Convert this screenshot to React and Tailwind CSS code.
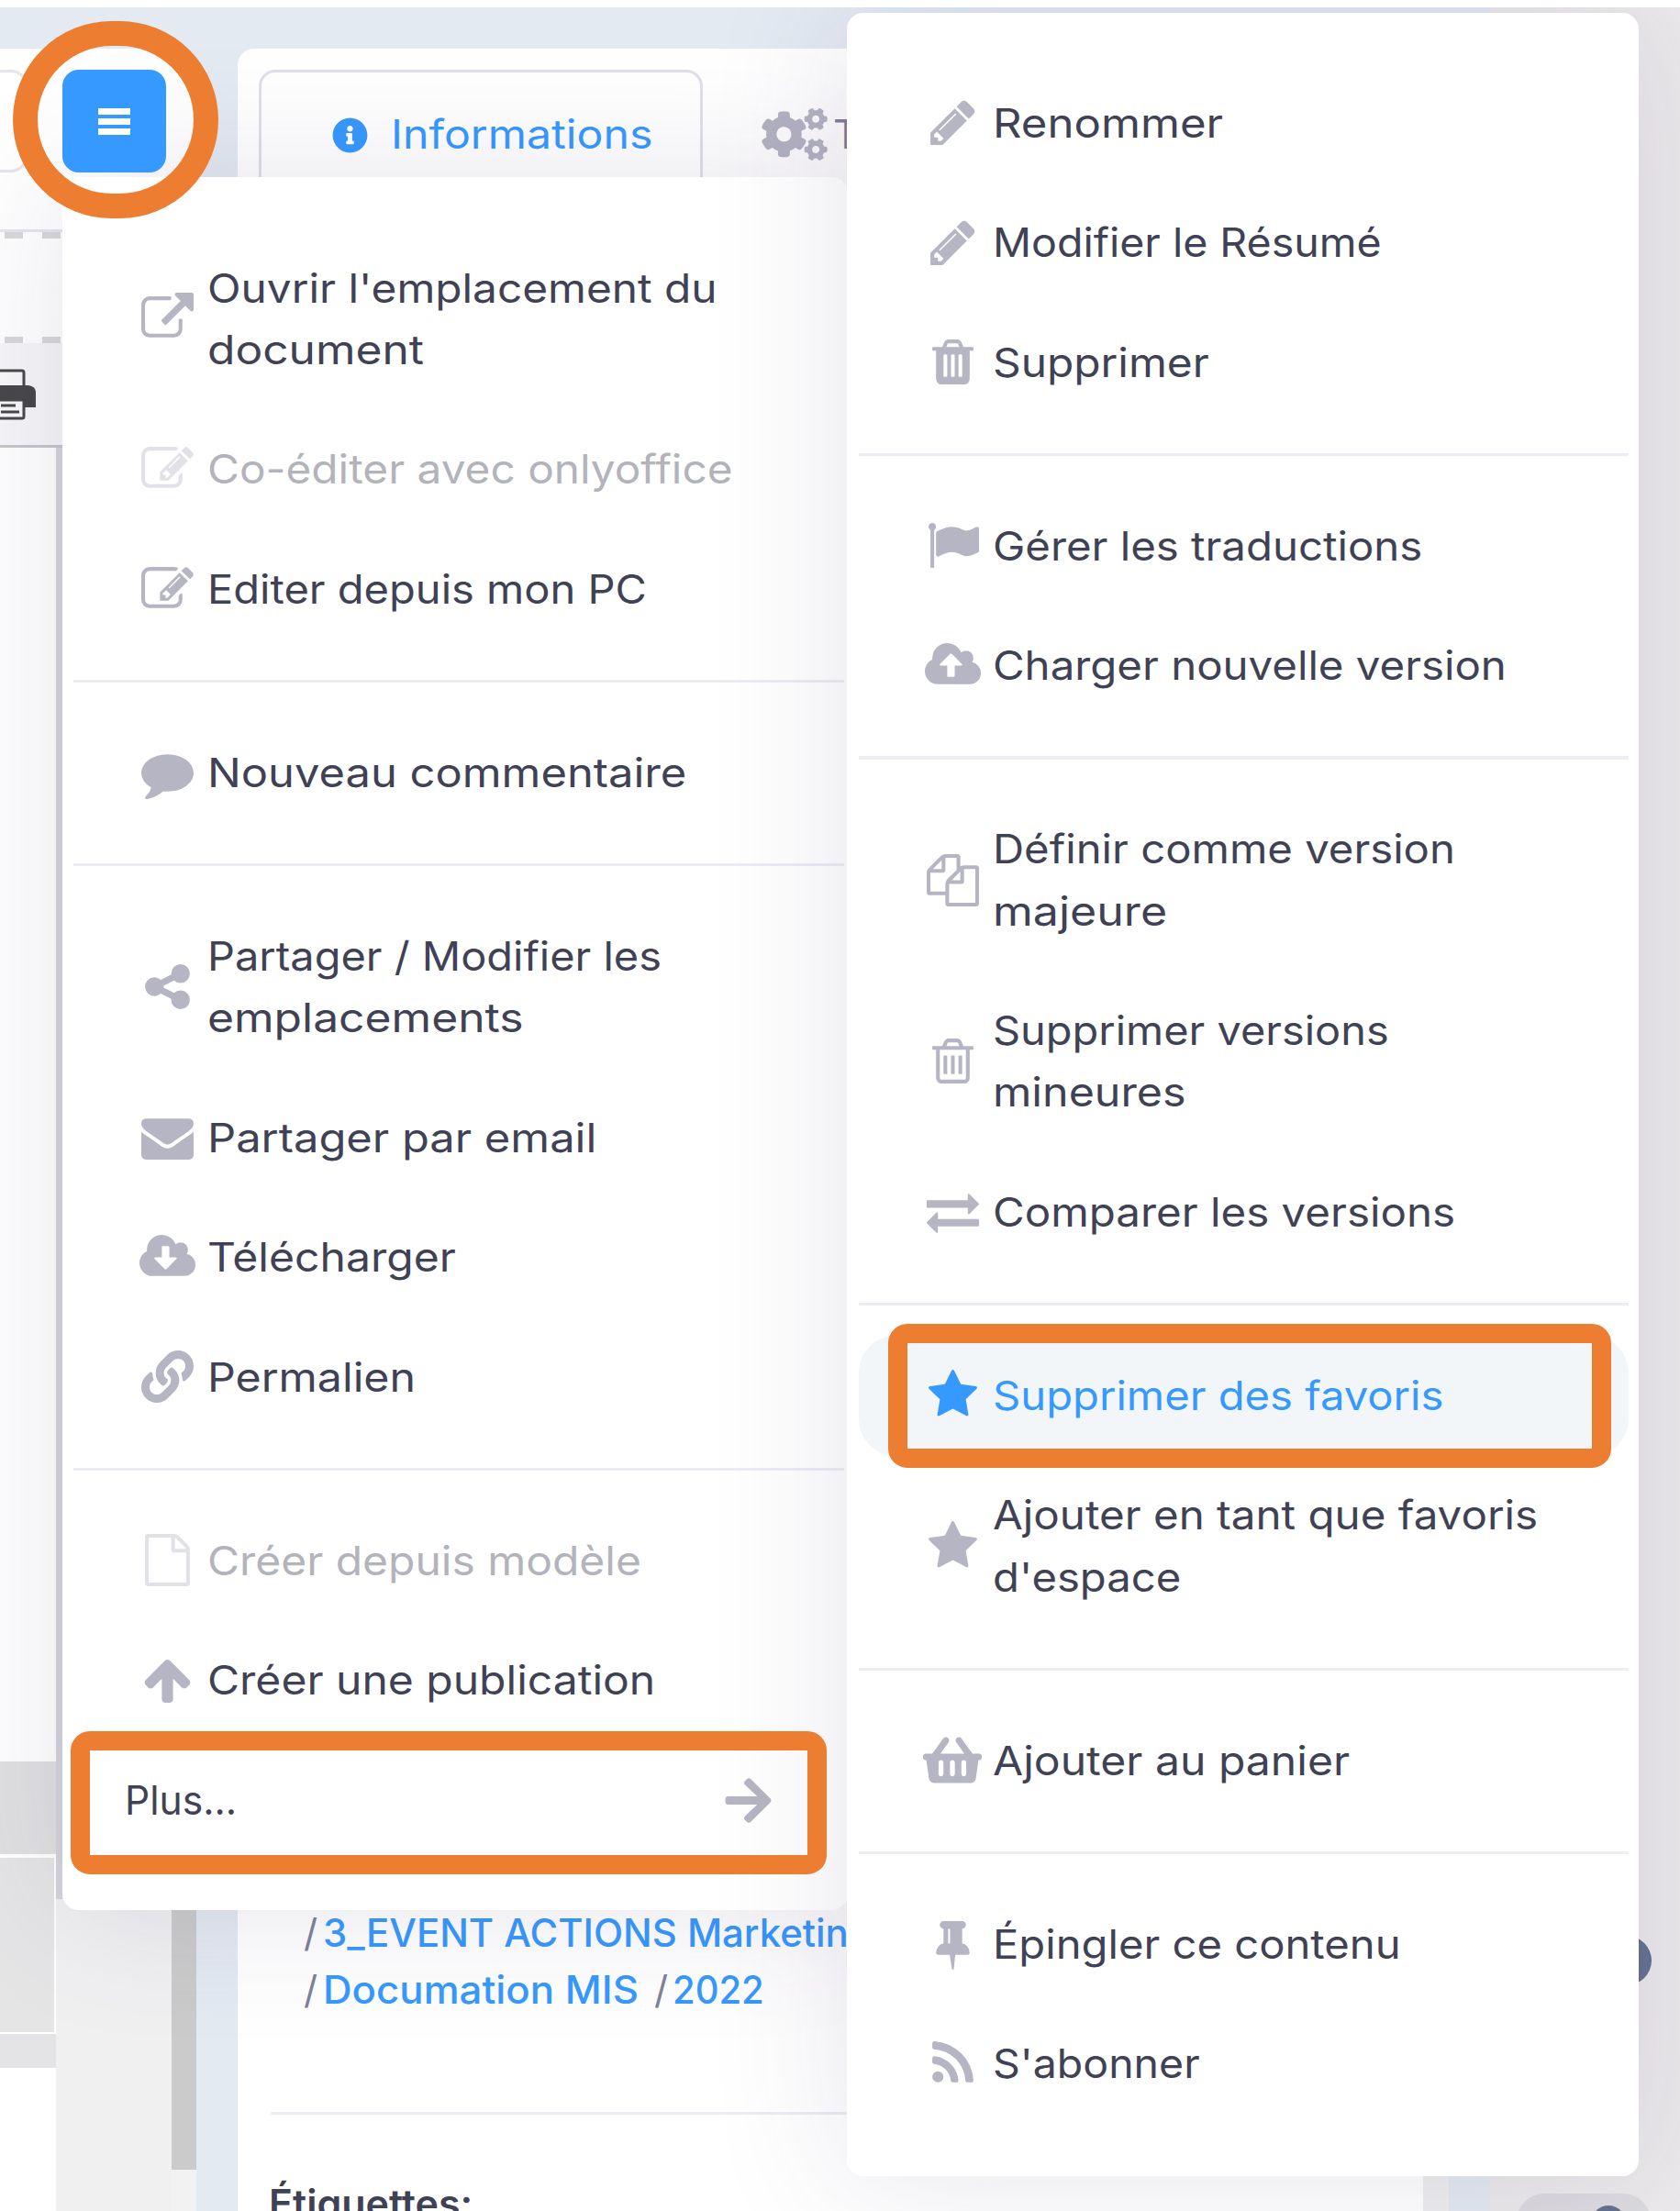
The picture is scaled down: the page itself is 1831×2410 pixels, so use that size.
import React, { useLayoutEffect, useRef, useState } from "react";
import { FaLink, FaShoppingBasket, FaArrowRight, FaInfoCircle, FaCogs } from "react-icons/fa";

const PATHS = {
  pencil:
    "M491 1536l91-91-235-235-91 91v107h128v128h107zm523-928q0-22-22-22-10 0-17 7l-542 542q-7 7-7 17 0 22 22 22 10 0 17-7l542-542q7-7 7-17zm-54-192l416 416-832 832h-416v-416zm683 96q0 53-37 90l-166 166-416-416 166-165q36-38 90-38 53 0 91 38l235 234q37 39 37 91z",
  external:
    "M1408 928v320q0 119-84.5 203.5t-203.5 84.5h-832q-119 0-203.5-84.5t-84.5-203.5v-832q0-119 84.5-203.5t203.5-84.5h704q14 0 23 9t9 23v64q0 14-9 23t-23 9h-704q-66 0-113 47t-47 113v832q0 66 47 113t113 47h832q66 0 113-47t47-113v-320q0-14 9-23t23-9h64q14 0 23 9t9 23zm384-864v512q0 26-19 45t-45 19-45-19l-176-176-652 652q-10 10-23 10t-23-10l-114-114q-10-10-10-23t10-23l652-652-176-176q-19-19-19-45t19-45 45-19h512q26 0 45 19t19 45z",
  edit:
    "M888 1184l116-116-152-152-116 116v56h96v96h56zm440-720q-16-16-33 1l-350 350q-17 17-1 33t33-1l350-350q17-17 1-33zm80 594v190q0 119-84.5 203.5t-203.5 84.5h-832q-119 0-203.5-84.5t-84.5-203.5v-832q0-119 84.5-203.5t203.5-84.5h832q63 0 117 25 15 7 18 23 3 17-9 29l-49 49q-14 14-32 8-23-6-45-6h-832q-66 0-113 47t-47 113v832q0 66 47 113t113 47h832q66 0 113-47t47-113v-126q0-13 9-22l64-64q15-15 35-7t20 29zm-96-738l288 288-672 672h-288v-288zm444 132l-92 92-288-288 92-92q28-28 68-28t68 28l152 152q28 28 28 68t-28 68z",
  comment:
    "M1792 896q0 174-120 321.5t-326 233-450 85.5q-70 0-145-8-198 175-460 242-49 14-114 22-17 2-30.5-9t-17.5-29v-1q-3-4-.5-12t2-10 4.5-9.5l6-9 7-8.5 8-9q7-8 31-34.5t34.5-38 31-39.5 32.5-51 27-59 26-76q-157-89-247.5-220t-90.5-281q0-130 71-248.5t191-204.5 286-136.5 348-50.5 348 50.5 286 136.5 191 204.5 71 248.5z",
  share:
    "M1344 1024q133 0 226.5 93.5t93.5 226.5-93.5 226.5-226.5 93.5-226.5-93.5-93.5-226.5q0-12 2-34l-360-180q-92 86-218 86-133 0-226.5-93.5t-93.5-226.5 93.5-226.5 226.5-93.5q126 0 218 86l360-180q-2-22-2-34 0-133 93.5-226.5t226.5-93.5 226.5 93.5 93.5 226.5-93.5 226.5-226.5 93.5q-126 0-218-86l-360 180q2 22 2 34t-2 34l360 180q92-86 218-86z",
  envelope:
    "M1792 710v794q0 66-47 113t-113 47h-1472q-66 0-113-47t-47-113v-794q44 49 101 87 362 246 497 345 57 42 92.5 65.5t94.5 48 110 24.5h2q51 0 110-24.5t94.5-48 92.5-65.5q170-123 498-345 57-39 100-87zm0-294q0 79-49 151t-122 123q-376 261-468 325-10 7-42.5 30.5t-54 38-52 32.5-57.5 27-50 9h-2q-23 0-50-9t-57.5-27-52-32.5-54-38-42.5-30.5q-91-64-262-182.5t-205-142.5q-62-42-117-115.5t-55-136.5q0-78 41.5-130t118.5-52h1472q65 0 112.5 47t47.5 113z",
  download:
    "M1216 928q0-14-9-23t-23-9h-224v-352q0-13-9.5-22.5t-22.5-9.5h-192q-13 0-22.5 9.5t-9.5 22.5v352h-224q-13 0-22.5 9.5t-9.5 22.5q0 14 9 23l352 352q9 9 23 9t23-9l351-351q10-12 10-24zm640 224q0 159-112.5 271.5t-271.5 112.5h-1088q-185 0-316.5-131.5t-131.5-316.5q0-130 70-240t188-165q-2-30-2-43 0-212 150-362t362-150q156 0 285.5 87t188.5 231q71-62 166-62 106 0 181 75t75 181q0 76-41 138 130 31 213.5 135.5t83.5 238.5z",
  upload:
    "M1216 864q0-14-9-23l-352-352q-9-9-23-9t-23 9l-351 351q-10 12-10 24 0 14 9 23t23 9h224v352q0 13 9.5 22.5t22.5 9.5h192q13 0 22.5-9.5t9.5-22.5v-352h224q13 0 22.5-9.5t9.5-22.5zm640 288q0 159-112.5 271.5t-271.5 112.5h-1088q-185 0-316.5-131.5t-131.5-316.5q0-130 70-240t188-165q-2-30-2-43 0-212 150-362t362-150q156 0 285.5 87t188.5 231q71-62 166-62 106 0 181 75t75 181q0 76-41 138 130 31 213.5 135.5t83.5 238.5z",
  trash:
    "M704 1376v-704q0-14-9-23t-23-9h-64q-14 0-23 9t-9 23v704q0 14 9 23t23 9h64q14 0 23-9t9-23zm256 0v-704q0-14-9-23t-23-9h-64q-14 0-23 9t-9 23v704q0 14 9 23t23 9h64q14 0 23-9t9-23zm256 0v-704q0-14-9-23t-23-9h-64q-14 0-23 9t-9 23v704q0 14 9 23t23 9h64q14 0 23-9t9-23zm-544-992h448l-48-117q-7-9-17-11h-317q-10 2-17 11zm928 32v64q0 14-9 23t-23 9h-96v948q0 83-47 143.5t-113 60.5h-832q-66 0-113-58.5t-47-141.5v-952h-96q-14 0-23-9t-9-23v-64q0-14 9-23t23-9h309l70-167q15-37 54-63t79-26h320q40 0 79 26t54 63l70 167h309q14 0 23 9t9 23z",
  trashOutline:
    "M704 736v576q0 14-9 23t-23 9h-64q-14 0-23-9t-9-23v-576q0-14 9-23t23-9h64q14 0 23 9t9 23zm256 0v576q0 14-9 23t-23 9h-64q-14 0-23-9t-9-23v-576q0-14 9-23t23-9h64q14 0 23 9t9 23zm256 0v576q0 14-9 23t-23 9h-64q-14 0-23-9t-9-23v-576q0-14 9-23t23-9h64q14 0 23 9t9 23zm128 724v-948h-896v948q0 22 7 40.5t14.5 27 10.5 8.5h832q3 0 10.5-8.5t14.5-27 7-40.5zm-672-1076h448l-48-117q-7-9-17-11h-317q-10 2-17 11zm928 32v64q0 14-9 23t-23 9h-96v948q0 83-47 143.5t-113 60.5h-832q-66 0-113-58.5t-47-141.5v-952h-96q-14 0-23-9t-9-23v-64q0-14 9-23t23-9h309l70-167q15-37 54-63t79-26h320q40 0 79 26t54 63l70 167h309q14 0 23 9t9 23z",
  flag:
    "M320 256q0 72-64 110v1266q0 13-9.5 22.5t-22.5 9.5h-64q-13 0-22.5-9.5t-9.5-22.5v-1266q-64-38-64-110 0-53 37.5-90.5t90.5-37.5 90.5 37.5 37.5 90.5zm1472 64v763q0 25-12.5 38.5t-39.5 27.5q-215 116-369 116-61 0-123.5-22t-108.5-48-115.5-48-142.5-22q-192 0-464 146-17 9-33 9-26 0-45-19t-19-45v-742q0-32 31-55 21-14 79-43 236-120 421-120 107 0 200 29t219 88q38 19 88 19 54 0 117.5-21t110-47 88-47 54.5-21q26 0 45 19t19 45z",
  files:
    "M1696 384q40 0 68 28t28 68v1216q0 40-28 68t-68 28h-960q-40 0-68-28t-28-68v-288h-544q-40 0-68-28t-28-68v-672q0-40 20-88t48-76l408-408q28-28 76-48t88-20h416q40 0 68 28t28 68v328q68-40 128-40h416zm-544 213l-299 299h299v-299zm-640-384l-299 299h299v-299zm196 647l316-316v-416h-384v416q0 40-28 68t-68 28h-416v640h512v-256q0-40 20-88t48-76zm956 804v-1152h-384v416q0 40-28 68t-68 28h-416v640h896z",
  exchange:
    "M1792 1184v192q0 13-9.5 22.5t-22.5 9.5h-1376v192q0 13-9.5 22.5t-22.5 9.5q-12 0-24-10l-319-320q-9-9-9-22 0-14 9-23l320-320q9-9 23-9 13 0 22.5 9.5t9.5 22.5v192h1376q13 0 22.5 9.5t9.5 22.5zm0-544q0 14-9 23l-320 320q-9 9-23 9-13 0-22.5-9.5t-9.5-22.5v-192h-1376q-13 0-22.5-9.5t-9.5-22.5v-192q0-13 9.5-22.5t22.5-9.5h1376v-192q0-14 9-23t23-9q12 0 24 10l319 319q9 9 9 23z",
  star:
    "M1728 647q0 22-26 48l-363 354 86 500q1 7 1 20 0 21-10.5 35.5t-30.5 14.5q-19 0-40-12l-449-236-449 236q-22 12-40 12-21 0-31.5-14.5t-10.5-35.5q0-6 2-20l86-500-364-354q-25-27-25-48 0-37 56-46l502-73 225-455q19-41 49-41t49 41l225 455 502 73q56 9 56 46z",
  file:
    "M1596 380q28 28 48 76t20 88v1152q0 40-28 68t-68 28h-1344q-40 0-68-28t-28-68v-1600q0-40 28-68t68-28h896q40 0 88 20t76 48zm-444-244v376h376q-10-29-22-41l-313-313q-12-12-41-22zm384 1528v-1024h-416q-40 0-68-28t-28-68v-416h-768v1536h1280z",
  arrowUp:
    "M1675 971q0 51-37 90l-75 75q-38 38-91 38-54 0-90-38l-294-293v704q0 52-37.5 84.5t-90.5 32.5h-128q-53 0-90.5-32.5t-37.5-84.5v-704l-294 293q-36 38-90 38t-90-38l-75-75q-38-38-38-90 0-53 38-91l651-651q35-37 90-37 54 0 91 37l651 651q37 39 37 91z",
  pin:
    "M800 864v-448q0-14-9-23t-23-9-23 9-9 23v448q0 14 9 23t23 9 23-9 9-23zm672 352q0 26-19 45t-45 19h-429l-51 483q-2 12-10.5 20.5t-20.5 8.5h-1q-27 0-32-27l-76-485h-404q-26 0-45-19t-19-45q0-123 78.5-221.5t177.5-98.5v-512q-52 0-90-38t-38-90 38-90 90-38h640q52 0 90 38t38 90-38 90-90 38v512q99 0 177.5 98.5t78.5 221.5z",
  rss:
    "M576 1344q0 80-56 136t-136 56-136-56-56-136 56-136 136-56 136 56 56 136zm512 123q2 28-17 48-18 21-47 21h-135q-25 0-43-16.5t-20-41.5q-22-229-184.5-391.5t-391.5-184.5q-25-2-41.5-20t-16.5-43v-135q0-29 21-47 17-17 43-17h5q160 13 306 80.5t259 181.5q114 113 181.5 259t80.5 306zm512 2q2 27-18 47-18 20-46 20h-143q-26 0-44.5-17.5t-19.5-42.5q-12-215-101-408.5t-231.5-336-336-231.5-408.5-102q-25-1-42.5-19.5t-17.5-43.5v-143q0-28 20-46 18-18 44-18h3q262 13 501.5 120t425.5 294q187 186 294 425.5t120 501.5z",
};

function Glyph({ name }) {
  if (name === "link") return <FaLink className="h-[57px] w-[57px]" />;
  if (name === "basket") return <FaShoppingBasket className="h-[57px] w-[64px]" />;
  return (
    <svg viewBox="0 0 1792 1792" className="h-[57px] w-[57px] overflow-visible" fill="currentColor">
      <path d={PATHS[name]} />
    </svg>
  );
}

/* Widens a line of text so that it spans the given width. */
function Line({ text, width, className = "" }) {
  const ref = useRef(null);
  const [stretch, setStretch] = useState(1);
  useLayoutEffect(() => {
    setStretch(width / ref.current.offsetWidth);
  }, [text, width]);
  return (
    <span className={"block shrink-0 whitespace-pre " + className} style={{ width }}>
      <span ref={ref} className="inline-block origin-left" style={{ transform: `scaleX(${stretch})` }}>
        {text}
      </span>
    </span>
  );
}

function Item({ icon, lines, disabled, active }) {
  const tone = active ? "text-[#3699ff]" : disabled ? "text-[#b2b3bb]" : "text-[#3f4254]";
  const iconTone = active ? "text-[#3699ff]" : disabled ? "text-[#e2e1e8]" : "text-[#b5b5c3]";
  return (
    <li
      className={
        "flex items-center rounded-[40px] py-[31.6px] pl-[65.5px] " + (active ? "bg-[#f3f6f9]" : "")
      }
    >
      <span className={"mb-[1px] flex w-[73px] shrink-0 justify-center " + iconTone}>
        <Glyph name={icon} />
      </span>
      <span className={"ml-[7.5px] " + tone}>
        {lines.map(([text, width]) => (
          <Line key={text} text={text} width={width + 4} />
        ))}
      </span>
    </li>
  );
}

function Divider() {
  return <li className="my-[33.05px] h-[3.5px] bg-[#ebedf3]" />;
}

const LEFT = [
  { icon: "external", lines: [["Ouvrir l'emplacement du", 552], ["document", 232]] },
  { icon: "edit", lines: [["Co-éditer avec onlyoffice", 568]], disabled: true },
  { icon: "edit", lines: [["Editer depuis mon PC", 475]] },
  null,
  { icon: "comment", lines: [["Nouveau commentaire", 518]] },
  null,
  { icon: "share", lines: [["Partager / Modifier les", 491], ["emplacements", 341]] },
  { icon: "envelope", lines: [["Partager par email", 420]] },
  { icon: "download", lines: [["Télécharger", 267]] },
  { icon: "link", lines: [["Permalien", 223]] },
  null,
  { icon: "file", lines: [["Créer depuis modèle", 469]], disabled: true },
  { icon: "arrowUp", lines: [["Créer une publication", 484]] },
];

const RIGHT = [
  { icon: "pencil", lines: [["Renommer", 247]] },
  { icon: "pencil", lines: [["Modifier le Résumé", 420]] },
  { icon: "trash", lines: [["Supprimer", 232]] },
  null,
  { icon: "flag", lines: [["Gérer les traductions", 464]] },
  { icon: "upload", lines: [["Charger nouvelle version", 556]] },
  null,
  { icon: "files", lines: [["Définir comme version", 500], ["majeure", 186]] },
  { icon: "trashOutline", lines: [["Supprimer versions", 428], ["mineures", 207]] },
  { icon: "exchange", lines: [["Comparer les versions", 500]] },
  null,
  { icon: "star", lines: [["Supprimer des favoris", 487]], active: true },
  { icon: "star", lines: [["Ajouter en tant que favoris", 590], ["d'espace", 201]] },
  null,
  { icon: "basket", lines: [["Ajouter au panier", 385]] },
  null,
  { icon: "pin", lines: [["Épingler ce contenu", 441]] },
  { icon: "rss", lines: [["S'abonner", 222]] },
];

function MenuItems({ items }) {
  return items.map((item, i) => (item ? <Item key={i} {...item} /> : <Divider key={i} />));
}

function Printer() {
  return (
    <svg viewBox="0 0 39 56" className="h-[56px] w-[39px]">
      <path d="M0 2h24q2 0 2 2v16H0" fill="#f8f8f9" stroke="#474749" strokeWidth="3" />
      <path d="M0 18h31q8 1 8 8v16H0z" fill="#474749" />
      <path d="M0 34h26v18q0 2-2 2H0" fill="#f8f8f9" stroke="#474749" strokeWidth="3" />
      <path d="M1 40h16M1 47h20" stroke="#474749" strokeWidth="3" />
    </svg>
  );
}

function Dashes() {
  return (
    <div className="flex h-[7px] gap-[21px] pl-[5px]">
      <span className="w-5 bg-[#d8d8d9]" />
      <span className="w-5 bg-[#d8d8d9]" />
      <span className="w-5 bg-[#d8d8d9]" />
    </div>
  );
}

function Viewer() {
  return (
    <section className="mt-[45px] flex h-[2357px] w-[214px] flex-col overflow-hidden rounded-tr-[18px] bg-white">
      <div className="h-[200px] border-b-[3px] border-[#e4e6ef] pt-[23px]">
        <div className="h-[112px] w-[30px] rounded-r-[18px] border-[3px] border-l-0 border-[#e4e6ef]" />
      </div>
      <Dashes />
      <div className="h-[107px]" />
      <Dashes />
      <div className="h-[114px] border-b-[3px] border-[#c6c6c9] bg-[#f6f6f8] pt-[28px]">
        <Printer />
      </div>
      <div className="flex grow">
        <div className="flex w-[61px] flex-col bg-[#e4e4e6]">
          <div className="h-[1432px] bg-white" />
          <div className="h-[101px] bg-[#e0e0e1]" />
          <div className="h-[196px] border-t-[4px] border-r-2 border-b-2 border-white bg-[#e5e5e6]" />
          <div className="mt-[37px] grow bg-white" />
        </div>
        <div className="flex w-[126px] bg-[#f0f0f1]">
          <div className="mb-[340px] w-[7px] bg-[#d5d4dc]" />
        </div>
        <div className="w-[27px] bg-[#f2f2f2]">
          <div className="h-[1877px] bg-[#cbcbcb]" />
        </div>
      </div>
    </section>
  );
}

function Details() {
  return (
    <section className="mt-[45px] flex h-[2357px] w-[1320px] rounded-tl-[18px] bg-white">
      <div className="w-[1292px]">
        <div className="flex h-[140px] pt-[23px] pl-[23px]">
          <div className="flex w-[484px] items-start rounded-t-[18px] border-[3px] border-b-0 border-[#dfe0ea] pt-[34px] pl-[77px] text-[#3699ff]">
            <FaInfoCircle className="mt-[15px] h-[39px] w-[39px]" />
            <Line text="Informations" width={285} className="ml-[25px] leading-[67px]" />
          </div>
          <div className="flex items-start pt-[37px] pl-[64px] text-[#b5b5c3]">
            <FaCogs className="mt-[5px] h-[57px] w-[72px]" />
            <span className="ml-[6px] leading-[67px] text-[#7e8299]">T</span>
          </div>
        </div>
        <div className="mt-[1882.5px] ml-[72px] text-[42px] leading-[62px] font-medium text-[#3699ff]">
          <div className="flex">
            <span className="w-[21px] font-normal text-[#7e8299]">/</span>
            <Line text="3_EVENT ACTIONS Marketing" width={599} />
          </div>
          <div className="flex">
            <span className="w-[21px] font-normal text-[#7e8299]">/</span>
            <Line text="Documation MIS" width={344} />
            <span className="ml-[17px] w-[20px] font-normal text-[#7e8299]">/</span>
            <Line text="2022" width={100} />
          </div>
        </div>
        <div className="mt-[102px] ml-[36px] h-[3px] w-[1220px] bg-[#ebedf3]" />
        <div className="mt-[66px] ml-[34px] text-[42px] leading-[62px] font-semibold text-[#3f4254]">
          <Line text="Étiquettes:" width={222} />
        </div>
      </div>
      <div className="w-[28px] bg-[#eeeeef]" />
    </section>
  );
}

function Rail() {
  return (
    <aside className="flex w-[207px] flex-col bg-[#eceaec]">
      <div className="mt-[2102px] ml-[122px] h-[54px] w-[54px] shrink-0 rounded-full bg-[#64728f]" />
      <div className="mt-[227px] ml-[29px] h-[60px] w-[146px] shrink-0 rounded-[30px] bg-[#dcdbdf] pt-[13px] pl-[81px]">
        <div className="h-[38px] w-[38px] rounded-full bg-[#64728f]" />
      </div>
    </aside>
  );
}

export default function App() {
  return (
    <main className="relative h-[2410px] w-[1831px] overflow-hidden bg-white pt-2 font-['Inter',sans-serif] text-[44px] leading-[67.3px] text-[#3f4254]">
      <div className="flex h-[2402px] bg-[#e3eaf2]">
        <Viewer />
        <div className="w-[45px]" />
        <Details />
        <div className="w-[45px]" />
        <Rail />
      </div>

      <button className="absolute top-[76px] left-[68px] z-10 flex h-[112px] w-[113px] flex-col items-center justify-center gap-[4px] rounded-[18px] bg-[#3699ff]">
        <span className="h-[7px] w-[35px] bg-white" />
        <span className="h-[7px] w-[35px] bg-white" />
        <span className="h-[7px] w-[35px] bg-white" />
      </button>

      <ul className="absolute top-[193px] left-[68px] h-[1889px] w-[856px] rounded-[18px] rounded-tl-none bg-white pt-[56px] pr-[4px] pl-[12px] shadow-[0_0_150px_rgba(82,63,105,0.15)]">
        <MenuItems items={LEFT} />
        <li className="flex items-center justify-between py-[31.6px] pr-[79px] pl-[56px]">
          <Line text="Plus..." width={122} />
          <FaArrowRight className="h-[57px] w-[51px] text-[#b5b5c3]" />
        </li>
      </ul>

      <ul className="absolute top-[14px] left-[923px] h-[2358px] w-[863px] rounded-[18px] bg-white pt-[55px] pr-[11px] pl-[13px] shadow-[0_0_150px_rgba(82,63,105,0.15)]">
        <MenuItems items={RIGHT} />
      </ul>

      <div className="absolute top-0 left-0 h-2 w-full bg-white" />
      <div className="absolute top-[23px] left-[14px] z-20 h-[215px] w-[224px] rounded-full border-[27px] border-[#ed7d31]" />
      <div className="absolute top-[1887px] left-[77px] z-20 h-[156px] w-[824px] rounded-[21px] border-[21px] border-[#ed7d31]" />
      <div className="absolute top-[1443px] left-[968px] z-20 h-[157px] w-[788px] rounded-[21px] border-[21px] border-[#ed7d31]" />
    </main>
  );
}
